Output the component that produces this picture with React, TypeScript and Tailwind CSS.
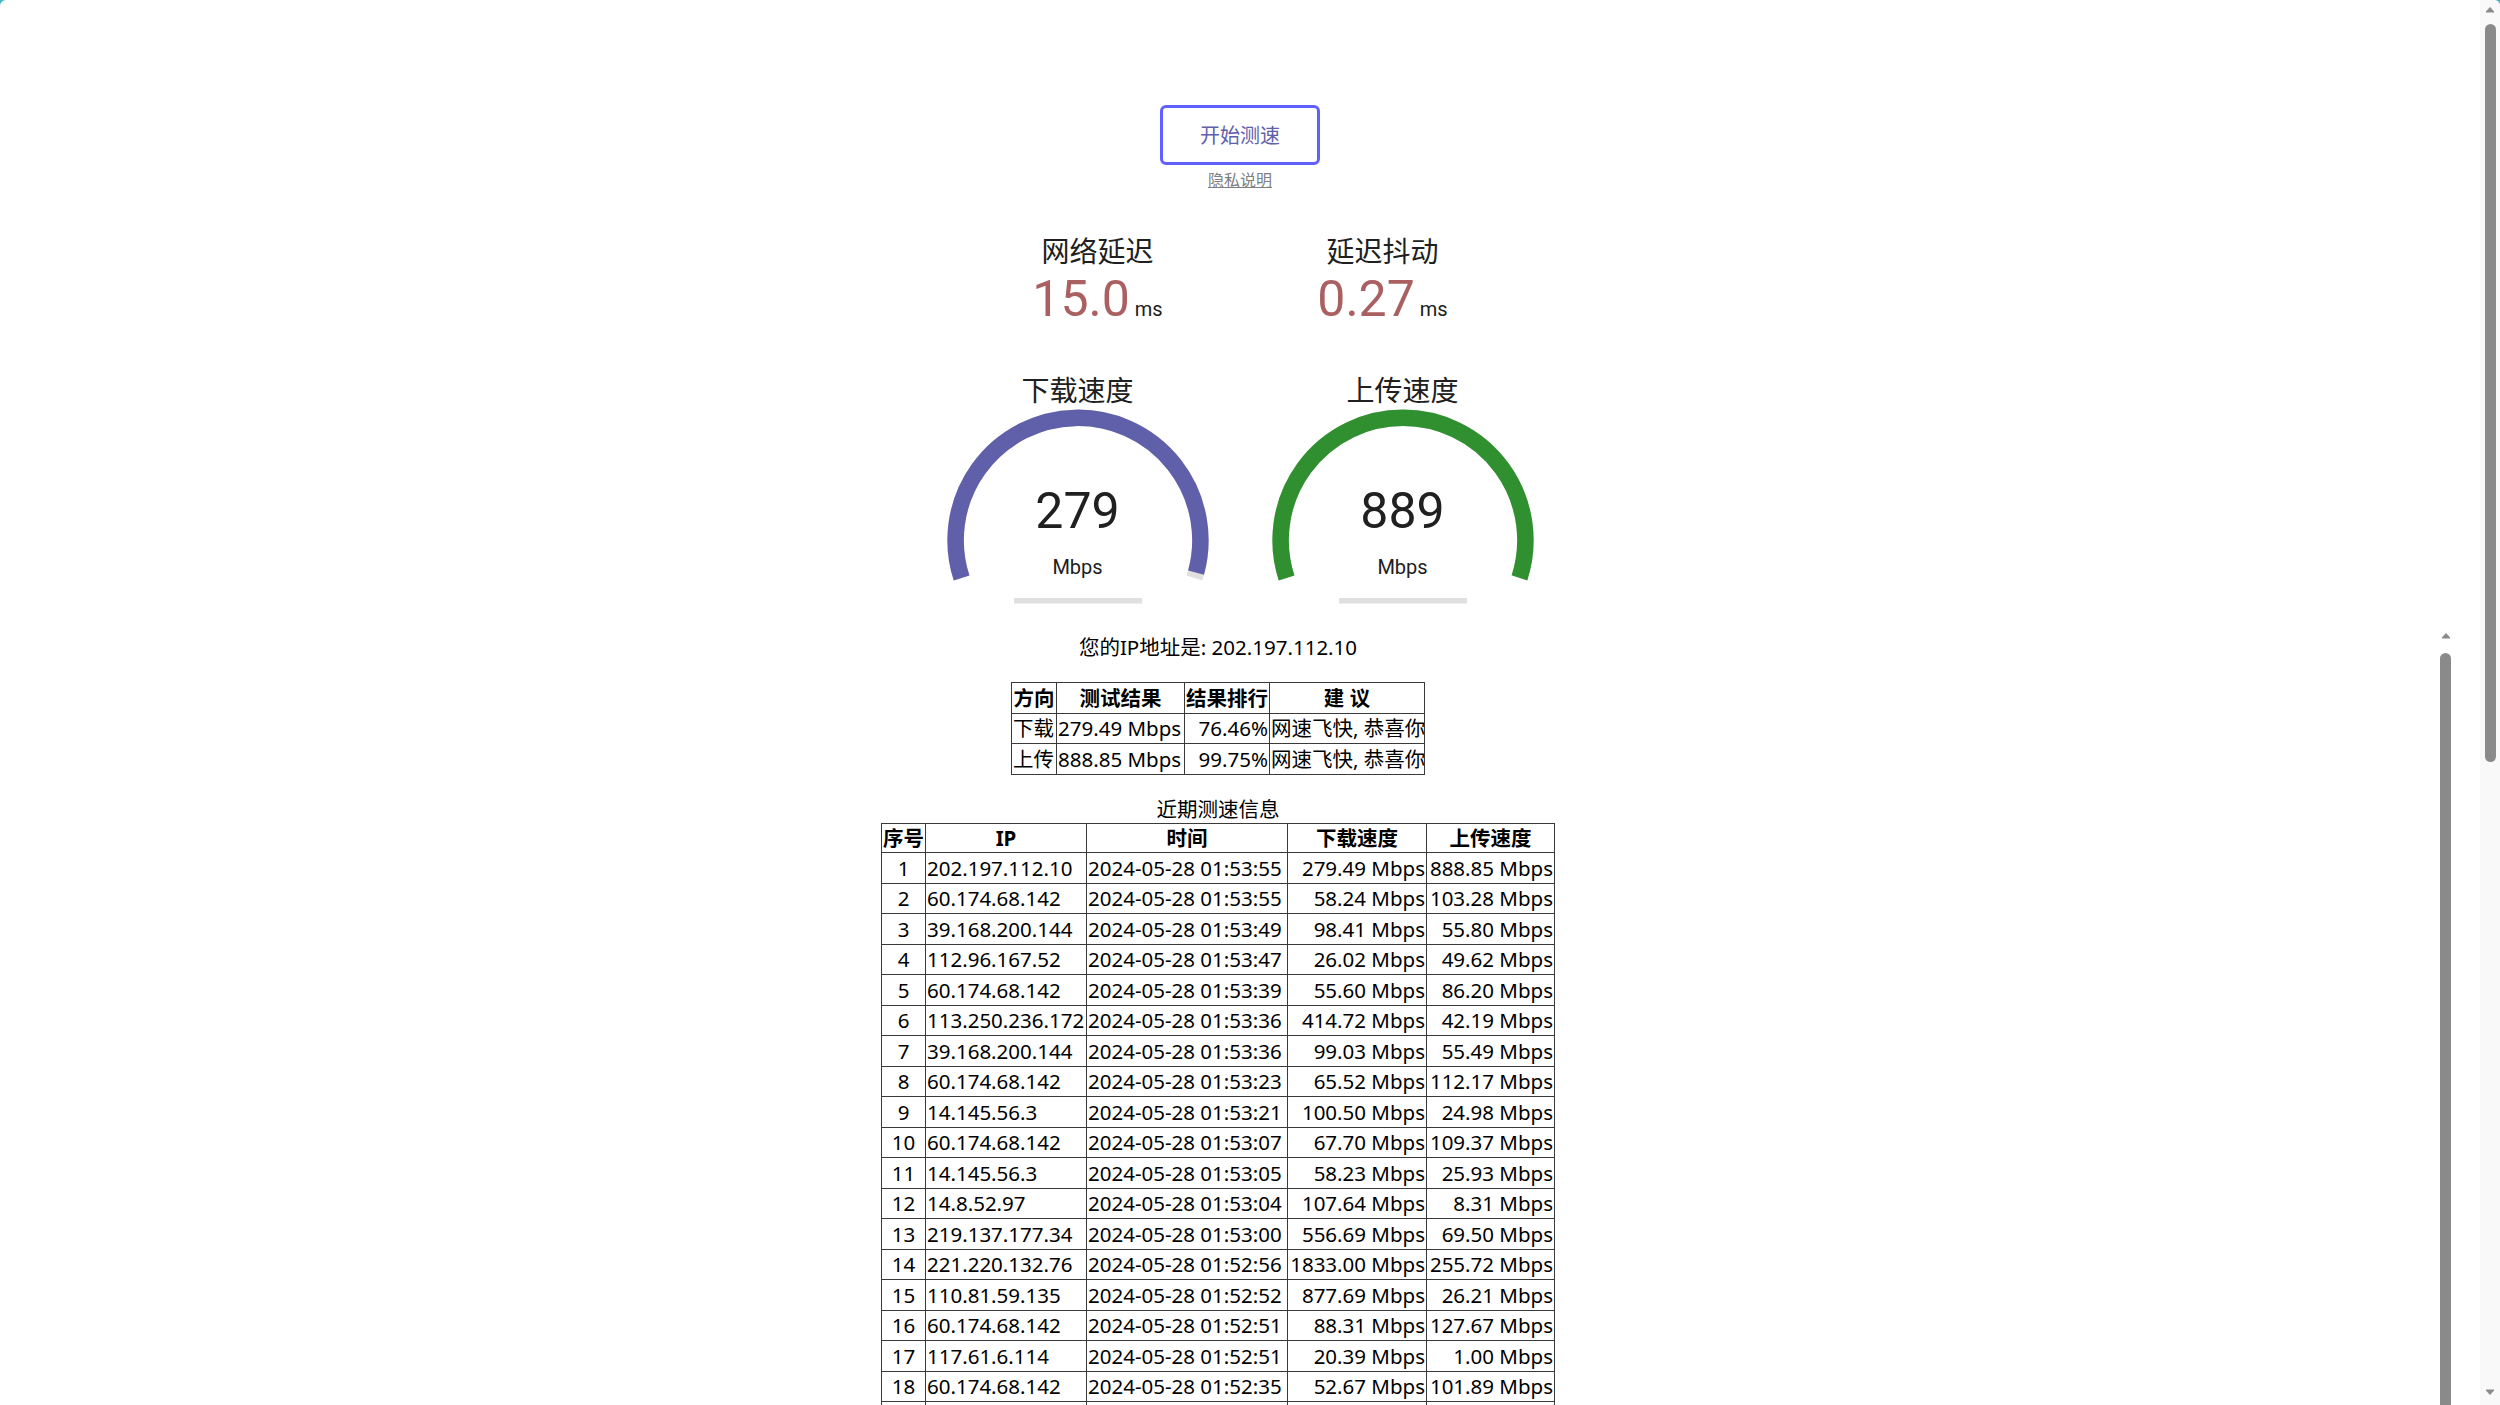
import React from "react";

const W = 320;
const H = 250;
const S = H * 0.0055;
const LW = 12 * S;
const CX = W / 2;
const CY = H - 58 * S;
const R = H / 1.8 - LW;

function mbpsToAmount(s: number) {
  return 1 - 1 / Math.pow(1.3, Math.sqrt(s));
}

function arcPath(a0: number, a1: number) {
  const x0 = CX + R * Math.cos(a0);
  const y0 = CY + R * Math.sin(a0);
  const x1 = CX + R * Math.cos(a1);
  const y1 = CY + R * Math.sin(a1);
  const large = a1 - a0 > Math.PI ? 1 : 0;
  return `M ${x0} ${y0} A ${R} ${R} 0 ${large} 1 ${x1} ${y1}`;
}

function Gauge({ name, value, mbps, color }: { name: string; value: string; mbps: number; color: string }) {
  const start = -Math.PI * 1.1;
  const end = Math.PI * 0.1;
  const amt = mbpsToAmount(mbps);
  const cur = amt * Math.PI * 1.2 - Math.PI * 1.1;
  return (
    <div className="relative flex h-[250px] w-[320px] flex-col items-center">
      <svg className="absolute left-0 top-0" width={W} height={H} viewBox={`0 0 ${W} ${H}`}>
        <path d={arcPath(start, end)} fill="none" stroke="#E0E0E0" strokeWidth={LW} />
        <path d={arcPath(start, cur)} fill="none" stroke={color} strokeWidth={LW} />
        <rect x={W * 0.3} y={H - 16 * S} width={W * 0.4} height={4 * S} fill="#E0E0E0" />
      </svg>
      <div className="relative mt-[6px] text-[28px] leading-[32px]">{name}</div>
      <div className="relative mt-[74px] text-[50px] leading-[58px]">{value}</div>
      <div className="relative mt-[15px] text-[20px] leading-[24px]">Mbps</div>
    </div>
  );
}

function Latency({ name, value }: { name: string; value: string }) {
  return (
    <div className="flex h-[140px] w-[280px] flex-col items-center">
      <div className="pt-[6px] text-[28px] leading-[34px]">{name}</div>
      <div className="flex items-baseline gap-[5px] leading-[58px]">
        <span className="text-[50px] text-[#AA6060]">{value}</span>
        <span className="text-[20px]">ms</span>
      </div>
    </div>
  );
}

const rows: [string, string, string, string, string][] = [
  ["1", "202.197.112.10", "2024-05-28 01:53:55", "279.49 Mbps", "888.85 Mbps"],
  ["2", "60.174.68.142", "2024-05-28 01:53:55", "58.24 Mbps", "103.28 Mbps"],
  ["3", "39.168.200.144", "2024-05-28 01:53:49", "98.41 Mbps", "55.80 Mbps"],
  ["4", "112.96.167.52", "2024-05-28 01:53:47", "26.02 Mbps", "49.62 Mbps"],
  ["5", "60.174.68.142", "2024-05-28 01:53:39", "55.60 Mbps", "86.20 Mbps"],
  ["6", "113.250.236.172", "2024-05-28 01:53:36", "414.72 Mbps", "42.19 Mbps"],
  ["7", "39.168.200.144", "2024-05-28 01:53:36", "99.03 Mbps", "55.49 Mbps"],
  ["8", "60.174.68.142", "2024-05-28 01:53:23", "65.52 Mbps", "112.17 Mbps"],
  ["9", "14.145.56.3", "2024-05-28 01:53:21", "100.50 Mbps", "24.98 Mbps"],
  ["10", "60.174.68.142", "2024-05-28 01:53:07", "67.70 Mbps", "109.37 Mbps"],
  ["11", "14.145.56.3", "2024-05-28 01:53:05", "58.23 Mbps", "25.93 Mbps"],
  ["12", "14.8.52.97", "2024-05-28 01:53:04", "107.64 Mbps", "8.31 Mbps"],
  ["13", "219.137.177.34", "2024-05-28 01:53:00", "556.69 Mbps", "69.50 Mbps"],
  ["14", "221.220.132.76", "2024-05-28 01:52:56", "1833.00 Mbps", "255.72 Mbps"],
  ["15", "110.81.59.135", "2024-05-28 01:52:52", "877.69 Mbps", "26.21 Mbps"],
  ["16", "60.174.68.142", "2024-05-28 01:52:51", "88.31 Mbps", "127.67 Mbps"],
  ["17", "117.61.6.114", "2024-05-28 01:52:51", "20.39 Mbps", "1.00 Mbps"],
  ["18", "60.174.68.142", "2024-05-28 01:52:35", "52.67 Mbps", "101.89 Mbps"],
];

const cell = "border border-[#3a3a3a] px-[1px] py-0 whitespace-nowrap overflow-hidden";

function Arrow({ up }: { up: boolean }) {
  return (
    <svg width="10" height="7" viewBox="0 0 10 7">
      {up ? (
        <path d="M1 6 L5 1.5 L9 6 Z" fill="#8a8a8a" stroke="#8a8a8a" strokeWidth="1" strokeLinejoin="round" />
      ) : (
        <path d="M1 1 L5 5.5 L9 1 Z" fill="#8a8a8a" stroke="#8a8a8a" strokeWidth="1" strokeLinejoin="round" />
      )}
    </svg>
  );
}

export default function App() {
  return (
    <div className="h-[1405px] w-full overflow-hidden bg-[#45b7c0]">
      <div className="flex h-full overflow-hidden rounded-t-[6px] bg-white">
        <div className="flex w-[2480px] shrink-0 flex-col items-center pt-[105px] text-[#202020] font-[family-name:Roboto,'Noto_Sans_CJK_SC',sans-serif]">
          <button className="h-[60px] w-[160px] rounded-[6px] border-[3px] border-[#6060FF] pt-[3px] text-[20px] leading-[51px] text-[#6060AA]">
            开始测速
          </button>
          <a className="mt-[5.5px] block text-[16px] leading-[20px] text-[#808080] underline">隐私说明</a>

          <div className="mt-[39.5px] flex gap-[5px]">
            <Latency name="网络延迟" value="15.0" />
            <Latency name="延迟抖动" value="0.27" />
          </div>

          <div className="flex gap-[5px]">
            <Gauge name="下载速度" value="279" mbps={279.49} color="#6060AA" />
            <Gauge name="上传速度" value="889" mbps={888.85} color="#309030" />
          </div>

          <div className="flex w-full flex-1">
            <div className="flex w-[2436px] shrink-0 flex-col items-center pt-[14px] text-black font-[family-name:'Noto_Sans','Noto_Sans_CJK_SC',sans-serif]">
              <div className="text-[20.5px] leading-[26px]">您的IP地址是: 202.197.112.10</div>

              <table className="mt-[22px] w-[413px] table-fixed border-collapse border border-[#3a3a3a] text-[20.5px] leading-[26px]">
                <colgroup>
                  <col className="w-[45px]" />
                  <col className="w-[128px]" />
                  <col className="w-[85px]" />
                  <col className="w-[155px]" />
                </colgroup>
                <thead>
                  <tr className="h-[30.5px]">
                    <th className={`${cell} text-center font-bold`}>方向</th>
                    <th className={`${cell} text-center font-bold`}>测试结果</th>
                    <th className={`${cell} text-center font-bold`}>结果排行</th>
                    <th className={`${cell} text-center font-bold`}>建 议</th>
                  </tr>
                </thead>
                <tbody>
                  <tr className="h-[30.5px]">
                    <td className={`${cell} text-left`}>下载</td>
                    <td className={`${cell} text-left`}>279.49 Mbps</td>
                    <td className={`${cell} text-right`}>76.46%</td>
                    <td className={`${cell} text-left`}>网速飞快, 恭喜你</td>
                  </tr>
                  <tr className="h-[30.5px]">
                    <td className={`${cell} text-left`}>上传</td>
                    <td className={`${cell} text-left`}>888.85 Mbps</td>
                    <td className={`${cell} text-right`}>99.75%</td>
                    <td className={`${cell} text-left`}>网速飞快, 恭喜你</td>
                  </tr>
                </tbody>
              </table>

              <div className="mt-[21px] text-[20.5px] leading-[26px]">近期测速信息</div>

              <table className="mt-[1px] w-[673px] table-fixed border-collapse border border-[#3a3a3a] text-[20.5px] leading-[26px]">
                <colgroup>
                  <col className="w-[44px]" />
                  <col className="w-[161px]" />
                  <col className="w-[201px]" />
                  <col className="w-[139px]" />
                  <col className="w-[128px]" />
                </colgroup>
                <thead>
                  <tr className="h-[29.5px]">
                    <th className={`${cell} text-center font-bold`}>序号</th>
                    <th className={`${cell} text-center font-bold`}>IP</th>
                    <th className={`${cell} text-center font-bold`}>时间</th>
                    <th className={`${cell} text-center font-bold`}>下载速度</th>
                    <th className={`${cell} text-center font-bold`}>上传速度</th>
                  </tr>
                </thead>
                <tbody>
                  {rows.map((r) => (
                    <tr key={r[0]} className="h-[30.5px]">
                      <td className={`${cell} text-center`}>{r[0]}</td>
                      <td className={`${cell} text-left`}>{r[1]}</td>
                      <td className={`${cell} text-left`}>{r[2]}</td>
                      <td className={`${cell} text-right`}>{r[3]}</td>
                      <td className={`${cell} text-right`}>{r[4]}</td>
                    </tr>
                  ))}
                  <tr className="h-[30.5px]">
                    <td className={cell}></td>
                    <td className={cell}></td>
                    <td className={cell}></td>
                    <td className={cell}></td>
                    <td className={cell}></td>
                  </tr>
                </tbody>
              </table>
            </div>
            <div className="flex w-[16px] shrink-0 flex-col items-start pl-[4px] pt-[12px]">
              <div className="flex w-[11px] justify-center">
                <Arrow up />
              </div>
              <div className="mt-[14px] w-[11px] flex-1 rounded-t-full bg-[#8a8a8a]" />
            </div>
          </div>
        </div>

        <div className="flex w-[20px] shrink-0 flex-col items-center bg-[#f9f9f9] pt-[6px] pb-[9px]">
          <Arrow up />
          <div className="mt-[11px] h-[738px] w-[11px] rounded-full bg-[#8a8a8a]" />
          <div className="flex-1" />
          <Arrow up={false} />
        </div>
      </div>
    </div>
  );
}
